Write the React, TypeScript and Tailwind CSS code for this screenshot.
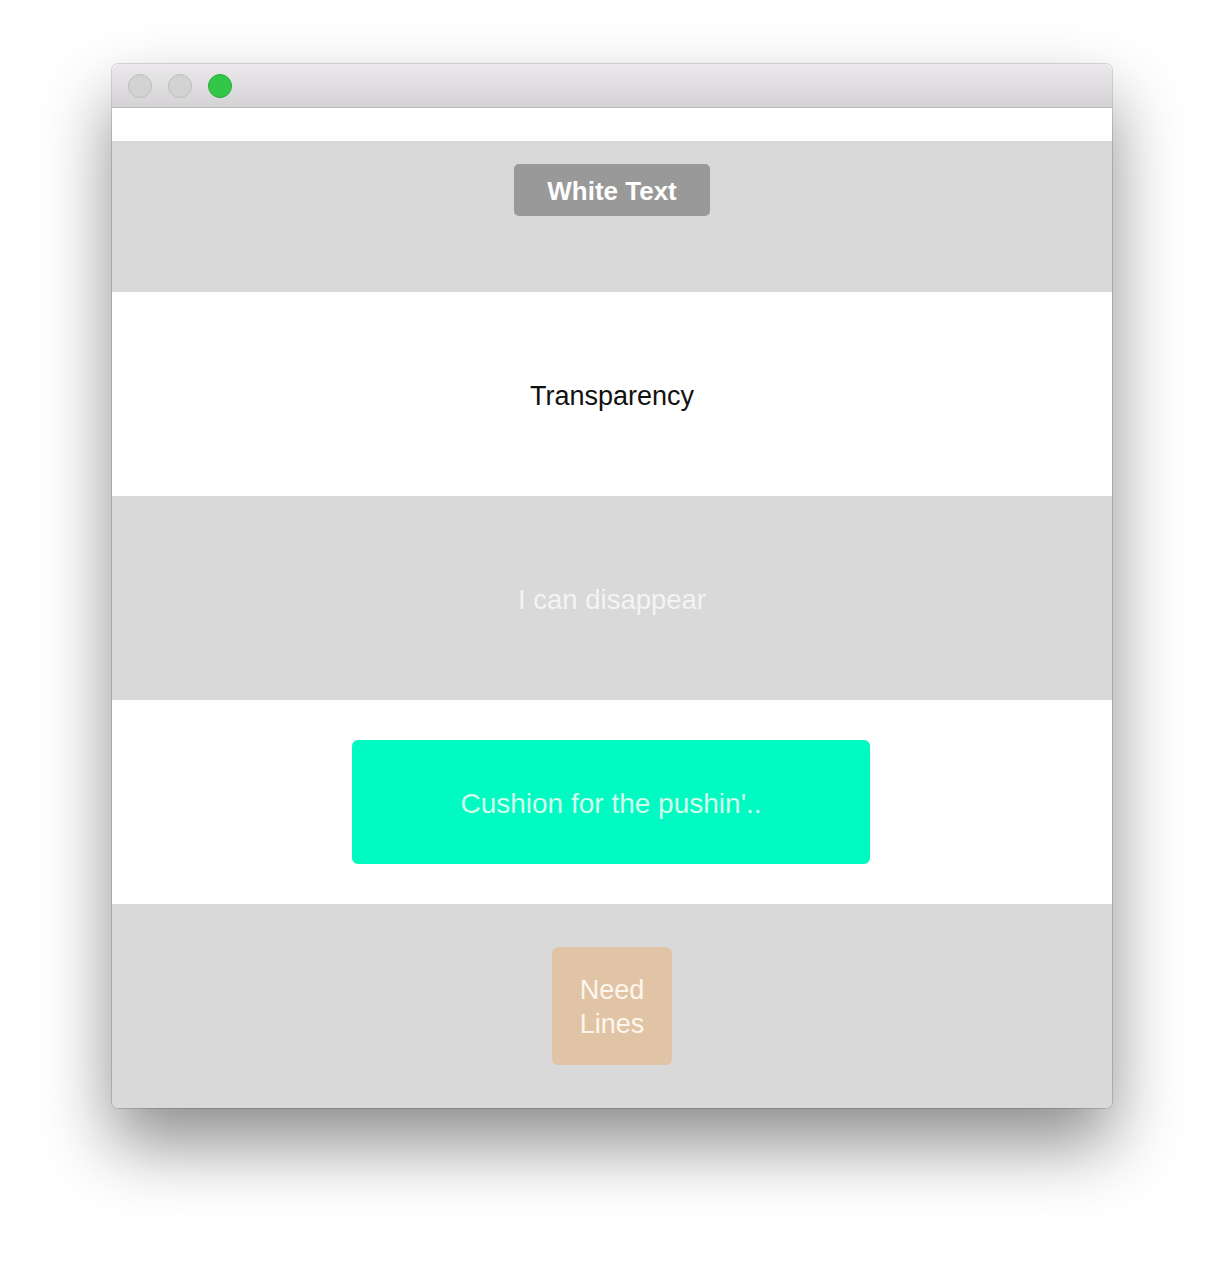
export default function App() {
  return (
    <div className="min-h-[1268px] w-full bg-white pt-[64px] font-['Liberation_Sans',Arial,sans-serif]">
      <div className="mx-auto w-[1000px] overflow-hidden rounded-[6px] shadow-[0_36px_70px_rgba(0,0,0,0.45),0_0_0_1px_rgba(0,0,0,0.14)]">
        {/* title bar */}
        <div className="flex h-[44px] items-center gap-[16px] border-b border-[#b9b9b9] bg-gradient-to-b from-[#ebe9eb] to-[#d4d2d4] pl-[16px]">
          <span className="h-[24px] w-[24px] rounded-full border border-[#bcbcbc] bg-[#d3d3d3]" />
          <span className="h-[24px] w-[24px] rounded-full border border-[#bcbcbc] bg-[#d3d3d3]" />
          <span className="h-[24px] w-[24px] rounded-full border border-[#27a93b] bg-[#33c748]" />
        </div>

        <div className="h-[33px] bg-white" />

        <div className="flex h-[151px] justify-center bg-[#d9d9d9] pt-[23px]">
          <div className="flex h-[52px] w-[196px] items-center justify-center rounded-[5px] bg-[#999999] pt-[2px] text-[26px] font-bold text-white">
            White Text
          </div>
        </div>

        <div className="flex h-[204px] items-center justify-center bg-white pt-[4px] text-[27px] text-[#111]">
          Transparency
        </div>

        <div className="flex h-[204px] items-center justify-center bg-[#d9d9d9] pt-[4px] text-[27.5px] text-[#f4f4f2]">
          I can disappear
        </div>

        <div className="flex h-[204px] items-center justify-center bg-white">
          <div className="flex h-[124px] w-[518px] -translate-x-px items-center justify-center rounded-[6px] bg-[#00fac2] pt-[3px] text-[28px] text-[#d2fdec]">
            Cushion for the pushin'..
          </div>
        </div>

        <div className="flex h-[204px] items-center justify-center bg-[#d9d9d9]">
          <div className="flex h-[118px] w-[120px] items-center justify-center rounded-[6px] bg-[#e1c4a6] pt-[2px] text-center text-[27px] leading-[34px] text-[#fdf6ee]">
            Need
            <br />
            Lines
          </div>
        </div>
      </div>
    </div>
  )
}
